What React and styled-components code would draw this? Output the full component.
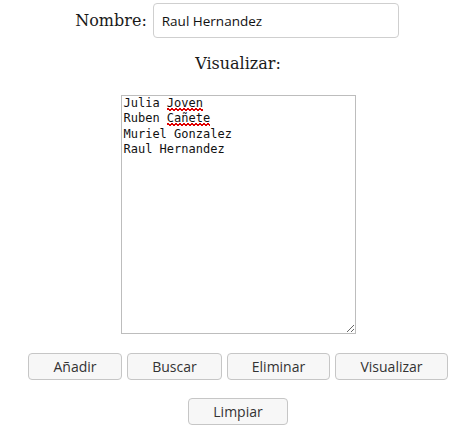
import React from "react";
import styled, { createGlobalStyle } from "styled-components";

const Global = createGlobalStyle`
  html, body { margin: 0; padding: 0; background: #ffffff; }
  body { font-family: "DejaVu Serif", serif; color: #1a1a1a; }
`;

const Page = styled.div`
  box-sizing: border-box;
  width: 100%;
  padding-left: 12px;
  display: flex;
  flex-direction: column;
  align-items: center;
`;

const NameRow = styled.div`
  margin-top: 3px;
  display: flex;
  align-items: center;
  gap: 6px;
  margin-left: -2px;
`;

const Label = styled.label`
  font-family: "DejaVu Serif", serif;
  font-size: 16px;
  line-height: 19px;
  color: #1a1a1a;
`;

const TextInput = styled.input`
  box-sizing: border-box;
  width: 246px;
  height: 35px;
  border: 1px solid #cfcfcf;
  border-radius: 4px;
  padding: 0 8px;
  font-family: "Open Sans", "Noto Sans", sans-serif;
  font-size: 13.5px;
  color: #111;
  background: #fff;
  outline: none;
`;

const Heading = styled.div`
  margin-top: 16px;
  font-family: "DejaVu Serif", serif;
  font-size: 16px;
  line-height: 19px;
  color: #1a1a1a;
`;

const Area = styled.div`
  box-sizing: border-box;
  margin-top: 22px;
  width: 235px;
  height: 239px;
  border: 1px solid #bdbdbd;
  padding: 0 2px;
  font-family: "DejaVu Sans Mono", monospace;
  font-size: 12px;
  line-height: 15.3px;
  color: #111;
  white-space: pre;
  resize: both;
  overflow: auto;
  background: #fff;
`;

const Typo = styled.span`
  padding-bottom: 1px;
  background-image:
    linear-gradient(45deg, transparent 38%, #e00000 38%, #e00000 62%, transparent 62%),
    linear-gradient(-45deg, transparent 38%, #e00000 38%, #e00000 62%, transparent 62%);
  background-size: 4px 3px;
  background-repeat: repeat-x;
  background-position: 0 100%, 2px 100%;
`;

const ButtonRow = styled.div`
  margin-top: 19px;
  display: flex;
  gap: 5px;
`;

const Button = styled.button`
  box-sizing: border-box;
  width: ${(p) => p.$w}px;
  height: 27px;
  border: 1px solid #c6c6c6;
  border-radius: 4px;
  background: #f7f7f7;
  color: #333;
  font-family: "Open Sans", "Noto Sans", sans-serif;
  font-size: 14px;
  padding: 0;
`;

const SecondRow = styled.div`
  margin-top: 18px;
  display: flex;
`;

export default function App() {
  return (
    <>
      <Global />
      <Page>
        <NameRow>
          <Label htmlFor="nombre">Nombre:</Label>
          <TextInput id="nombre" defaultValue="Raul Hernandez" />
        </NameRow>
        <Heading>Visualizar:</Heading>
        <Area>
          {"Julia "}<Typo>Joven</Typo>{"\n"}
          {"Ruben "}<Typo>Cañete</Typo>{"\n"}
          {"Muriel Gonzalez\n"}
          {"Raul Hernandez"}
        </Area>
        <ButtonRow>
          <Button $w={94}>Añadir</Button>
          <Button $w={95}>Buscar</Button>
          <Button $w={103}>Eliminar</Button>
          <Button $w={113}>Visualizar</Button>
        </ButtonRow>
        <SecondRow>
          <Button $w={100}>Limpiar</Button>
        </SecondRow>
      </Page>
    </>
  );
}
